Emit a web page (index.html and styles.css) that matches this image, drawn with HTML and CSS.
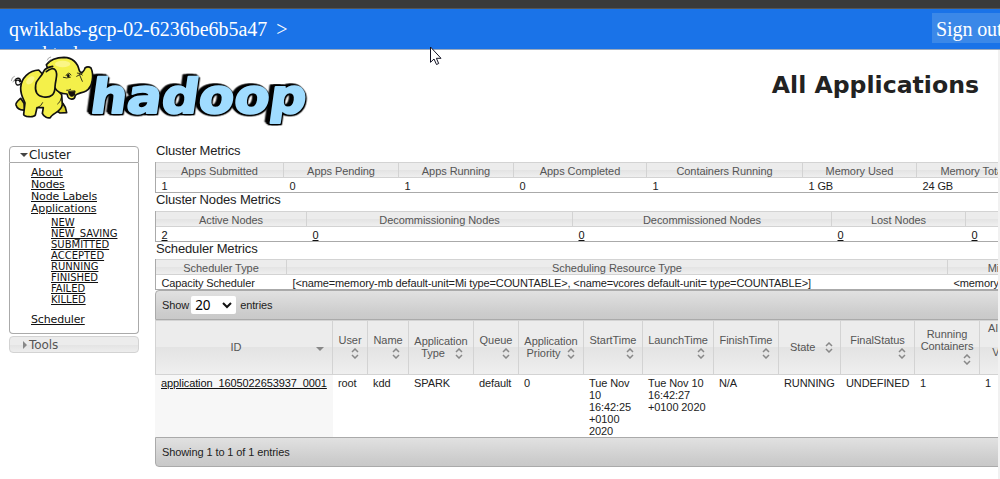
FILE: index.html
```
<!DOCTYPE html>
<html lang="en">
<head>
<meta charset="utf-8">
<title>All Applications</title>
<link rel="stylesheet" href="styles.css">
</head>
<body>
<svg class="defs" width="0" height="0">
  <symbol id="sort" viewBox="0 0 8 11"><path d="M1 4 4 1 7 4M1 7 4 10 7 7" fill="none" stroke="#888" stroke-width="1.5"/></symbol>
</svg>
<div class="chrome"></div>
<div class="topbar">
  <div class="project"><span class="pid">qwiklabs-gcp-02-6236be6b5a47</span><span class="gt">&gt;</span><br>sparktodp</div>
  <div class="signout">Sign out</div>
</div>
<div class="page">
  <header class="header">
    <svg class="logo" viewBox="0 0 960 240" width="320" height="80">
      <g class="mark"><text class="wordmark" transform="translate(266 188) skewX(-8)" textLength="648" lengthAdjust="spacingAndGlyphs">hadoop</text></g>
      <g stroke="#111" stroke-width="5" stroke-linejoin="round" stroke-linecap="round" fill="#f4f04a">
        <path d="M62 101C52 109 47 104 47 96C48 89 57 88 60 96M62 94C61 83 49 81 45 92" fill="none" stroke-width="4"/>
        <path d="M164 146C185 152 198 168 200 188L180 189 166 180Z" fill="#d8d02c"/>
        <path d="M62 145C55 151 46 157 48 165C51 175 60 181 74 180L72 160Z" fill="#e6df38"/>
        <path d="M116 60C88 61 63 84 62 113C61 133 72 151 75 159L71 193C72 201 101 203 106 195L111 173 130 173 127 190C132 202 144 205 151 203C156 189 184 187 187 164L185 134Z"/>
        <path d="M139 44C150 30 170 22 192 22C219 23 233 39 238 62C244 75 254 61 255 54Q264 47 273 54C282 74 279 111 258 123C244 130 226 130 225 139C224 150 208 150 204 141L201 132C184 132 170 123 164 113L139 44Z"/>
        <path d="M158 49C145 51 134 57 131 64C122 87 108 87 107 105C104 126 112 139 131 141C153 144 165 133 165 111C166 87 176 73 166 60C161 53 151 55 139 65"/>
        <path d="M206 125C207 139 214 142 223 136L225 124Z" fill="#16100a" stroke-width="3"/>
        <path d="M198 77Q206 62 213 75M232 69Q242 69 247 75M190 82Q199 86 211 82M230 79L248 69M239 75L247 94M200 121Q206 122 212 118M112 173Q124 169 128 158M184 143Q182 157 173 162" fill="none" stroke-width="2.5"/>
        <ellipse cx="205" cy="77" rx="4" ry="5" fill="#111" stroke="none"/>
        <path d="M142 30Q143 23 152 21M146 36Q148 30 152 29M34 92Q35 81 43 79M39 96Q41 90 45 88" fill="none" stroke="#777" stroke-width="2"/>
      </g>
      <g fill="#fff9a0" opacity=".7"><ellipse cx="188" cy="42" rx="23" ry="10"/><ellipse cx="91" cy="91" rx="15" ry="9" transform="rotate(-45 91 91)"/></g>
    </svg>
    <h1 class="title">All Applications</h1>
  </header>
  <div class="layout">
    <nav class="nav">
      <h3 class="nav-head open"><i class="tri down"></i>Cluster</h3>
      <div class="nav-body">
        <ul class="links">
          <li><a>About</a></li><li><a>Nodes</a></li><li><a>Node Labels</a></li><li><a>Applications</a></li>
        </ul>
        <ul class="sub">
          <li><a>NEW</a></li><li><a>NEW_SAVING</a></li><li><a>SUBMITTED</a></li><li><a>ACCEPTED</a></li><li><a>RUNNING</a></li><li><a>FINISHED</a></li><li><a>FAILED</a></li><li><a>KILLED</a></li>
        </ul>
        <ul class="links"><li><a>Scheduler</a></li></ul>
      </div>
      <h3 class="nav-head"><i class="tri right"></i>Tools</h3>
    </nav>
    <main class="content">
      <h2 class="section">Cluster Metrics</h2>
      <table class="metrics m-cluster">
        <colgroup><col style="width:128px"><col style="width:115px"><col style="width:115px"><col style="width:133px"><col style="width:156px"><col style="width:114px"><col style="width:113px"></colgroup>
        <tr><th>Apps Submitted</th><th>Apps Pending</th><th>Apps Running</th><th>Apps Completed</th><th>Containers Running</th><th>Memory Used</th><th>Memory Total</th></tr>
        <tr><td>1</td><td>0</td><td>1</td><td>0</td><td>1</td><td>1 GB</td><td>24 GB</td></tr>
      </table>
      <h2 class="section">Cluster Nodes Metrics</h2>
      <table class="metrics m-nodes">
        <colgroup><col style="width:151px"><col style="width:266px"><col style="width:259px"><col style="width:134px"><col style="width:150px"></colgroup>
        <tr><th>Active Nodes</th><th>Decommissioning Nodes</th><th>Decommissioned Nodes</th><th>Lost Nodes</th><th></th></tr>
        <tr><td><a>2</a></td><td><a>0</a></td><td><a>0</a></td><td><a>0</a></td><td><a>0</a></td></tr>
      </table>
      <h2 class="section">Scheduler Metrics</h2>
      <table class="metrics m-sched">
        <colgroup><col style="width:131px"><col style="width:661px"><col style="width:174px"></colgroup>
        <tr><th>Scheduler Type</th><th>Scheduling Resource Type</th><th>Minimum Allocation</th></tr>
        <tr><td>Capacity Scheduler</td><td>[&lt;name=memory-mb default-unit=Mi type=COUNTABLE&gt;, &lt;name=vcores default-unit= type=COUNTABLE&gt;]</td><td>&lt;memory:1024, vCores:1&gt;</td></tr>
      </table>
      <div class="bar bar-top"><span>Show</span><span class="select">20<svg width="10" height="7" viewBox="0 0 10 7"><path d="M1 1 5 5 9 1" fill="none" stroke="#111" stroke-width="2"/></svg></span><span>entries</span></div>
      <table class="apps">
        <colgroup><col style="width:178px"><col style="width:35px"><col style="width:41px"><col style="width:65px"><col style="width:45px"><col style="width:65px"><col style="width:59px"><col style="width:71px"><col style="width:65px"><col style="width:62px"><col style="width:74px"><col style="width:65px"><col style="width:65px"></colgroup>
        <tr>
          <th><div class="cell"><span class="lbl">ID</span><i class="tri sorted"></i></div></th>
          <th><div class="cell two">User<svg class="ic"><use href="#sort"/></svg></div></th>
          <th><div class="cell two">Name<svg class="ic"><use href="#sort"/></svg></div></th>
          <th><div class="cell two">Application<span class="ln">Type<svg class="ic"><use href="#sort"/></svg></span></div></th>
          <th><div class="cell two">Queue<svg class="ic"><use href="#sort"/></svg></div></th>
          <th><div class="cell two">Application<span class="ln pri">Priority<svg class="ic"><use href="#sort"/></svg></span></div></th>
          <th><div class="cell two">StartTime<svg class="ic"><use href="#sort"/></svg></div></th>
          <th><div class="cell two">LaunchTime<svg class="ic"><use href="#sort"/></svg></div></th>
          <th><div class="cell two">FinishTime<svg class="ic"><use href="#sort"/></svg></div></th>
          <th><div class="cell"><span class="ln state">State<svg class="ic"><use href="#sort"/></svg></span></div></th>
          <th><div class="cell two">FinalStatus<svg class="ic"><use href="#sort"/></svg></div></th>
          <th><div class="cell two">Running<br>Containers<svg class="ic"><use href="#sort"/></svg></div></th>
          <th><div class="cell two last">Allocated<br>CPU<br>VCores<svg class="ic"><use href="#sort"/></svg></div></th>
        </tr>
        <tr><td><a>application_1605022653937_0001</a></td><td>root</td><td>kdd</td><td>SPARK</td><td>default</td><td>0</td><td>Tue Nov<br>10<br>16:42:25<br>+0100<br>2020</td><td>Tue Nov 10<br>16:42:27<br>+0100 2020</td><td>N/A</td><td>RUNNING</td><td>UNDEFINED</td><td>1</td><td>1</td></tr>
      </table>
      <div class="bar bar-bottom">Showing 1 to 1 of 1 entries</div>
    </main>
  </div>
</div>
<svg class="cursor" width="12" height="20" viewBox="0 0 12 20"><path d="M.5 1V16.3L4 13 6.5 18.5 8.7 17.5 6.4 12.3H11Z" fill="#fff" stroke="#112" stroke-width="1"/></svg>
</body>
</html>
```
FILE: styles.css
```
* { box-sizing: border-box; }
html { overflow: hidden; }
body { margin: 0; width: 1000px; height: 479px; overflow: hidden; background: #f1f1f1; color: #222; font: 11px/12px "Liberation Sans", Arial, sans-serif; }
a { color: #111; text-decoration: underline; }
ul { list-style: none; margin: 0; padding: 0; }
.defs { display: block; }
.chrome { height: 9px; background: #3a3a3a; border-bottom: 1px solid #555; }
.topbar { display: flex; height: 41px; background: #1a73e8; border-bottom: 1px solid #9aa9bd; color: #fff; font: 20px/22px "Liberation Serif", serif; overflow: hidden; }
.project { padding: 8px 0 0 9px; width: 932px; flex: none; line-height: 24px; }
.pid { letter-spacing: -.02px; }
.gt { margin-left: 9px; }
.signout { flex: none; width: 80px; height: 30px; margin-top: 4px; padding: 5px 4px; background: #3b88e8; white-space: nowrap; letter-spacing: -.1px; }
.page { width: 998px; height: 429px; background: #fff; overflow: hidden; }
.header { display: flex; justify-content: space-between; height: 94px; }
.logo { flex: none; }
.mark { filter: drop-shadow(4px 4px 0 #000) drop-shadow(-5px -5px 0 #000) drop-shadow(-10px 0 0 #000); }
.wordmark { font: bold 143px "DejaVu Sans", sans-serif; fill: #a0dcff; stroke: #a0dcff; stroke-width: 6px; stroke-linejoin: round; }
.title { margin: 20px 19px 0 0; font: bold 23.6px/30px "DejaVu Sans", sans-serif; }
.layout { display: flex; }
.nav { flex: none; width: 130px; margin: 2px 16px 0 9px; font-family: "DejaVu Sans", sans-serif; }
.nav-head { display: flex; align-items: center; height: 17px; margin: 0; border: 1px solid #d3d3d3; border-radius: 4px; background: linear-gradient(#ececec 50%, #e3e3e3 50%, #ededed); color: #555; font-size: 12px; font-weight: normal; letter-spacing: -.1px; }
.nav-head.open { background: #fff; border-color: #aaa; border-radius: 4px 4px 0 0; color: #212121; }
.tri { display: inline-block; width: 0; height: 0; border: 4px solid transparent; }
.down { border-top-color: #444; margin: 1px 1px 0 10px; border-bottom: 0; }
.right { border-left-color: #888; margin: 1px 1px 0 13px; border-right: 0; width: 5px; }
.nav-body { height: 171px; margin-bottom: 2px; padding: 4px 0 0 21px; border: 1px solid #aaa; border-top: 0; border-radius: 0 0 4px 4px; }
.links { font-size: 11px; line-height: 12px; letter-spacing: -.15px; }
.sub { padding: 2px 0 9px 20px; font-size: 10px; line-height: 11px; }
.content { flex: none; width: 966px; }
.section { margin: 0; height: 18px; padding-left: 1px; font-size: 13px; line-height: 14px; font-weight: normal; letter-spacing: -.15px; }
.metrics, .apps { table-layout: fixed; border-spacing: 0; width: 966px; }
.apps { width: 890px; }
.m-cluster { width: 874px; }
.m-nodes { width: 960px; }
.metrics { border-left: 1px solid #aaa; border-bottom: 1px solid #aaa; }
.m-sched { margin-top: -1px; }
th { padding: 0; border: 0 solid #d3d3d3; color: #555; font-weight: normal; white-space: nowrap; background: linear-gradient(#ececec 50%, #e3e3e3 50%, #efefef); }
.metrics th { height: 16px; padding-top: 3px; border-width: 1px 1px 1px 0; line-height: 11px; letter-spacing: -.06px; }
.metrics td { height: 14px; padding: 3px 5.5px 0; line-height: 11px; white-space: nowrap; letter-spacing: -.12px; }
.bar { width: 966px; height: 30px; border: 1px solid #aaa; background: linear-gradient(#e1e1e1, #cccccc 80%, #c9c9c9); letter-spacing: -.1px; }
.bar-top { display: flex; align-items: center; gap: 3px; padding: 0 6px; border-radius: 4px 0 0; }
.select { display: flex; align-items: center; justify-content: space-between; width: 45px; height: 18px; padding: 0 4px; margin: 0 1px 0 -1px; border-radius: 2px; background: #fff; color: #000; font: 13.5px "Noto Sans", sans-serif; }
.apps th { height: 55px; border-width: 1px 1px 1px 0; vertical-align: middle; letter-spacing: -.05px; }
.apps th:first-child { border-left-width: 1px; }
.cell { display: flex; align-items: center; margin-top: -2px; }
.lbl { flex: 1; text-align: center; }
.sorted { border-top-color: #888; border-bottom: 0; margin: 4px 8px 0 0; }
.two { flex-direction: column; }
.ic { width: 8px; height: 11px; }
.two > .ic { align-self: flex-end; margin: 2px 8px 0 0; }
.ln { display: flex; gap: 10px; align-items: center; padding-left: 2px; }
.ln .ic { position: relative; top: 1px; }
.pri { padding-left: 0; gap: 7px; }
.state { gap: 10px; padding-left: 11px; }
.last { text-align: center; margin-left: -3px; }
.apps td { height: 62px; padding: 2px 0 0 5px; vertical-align: top; line-height: 12px; white-space: nowrap; letter-spacing: -.1px; }
.apps td:first-child { padding-left: 6px; background: #f7f7f7; }
.bar-bottom { padding: 8px 6px; border-radius: 0 0 0 4px; }
.cursor { position: absolute; left: 430px; top: 46px; }
```
